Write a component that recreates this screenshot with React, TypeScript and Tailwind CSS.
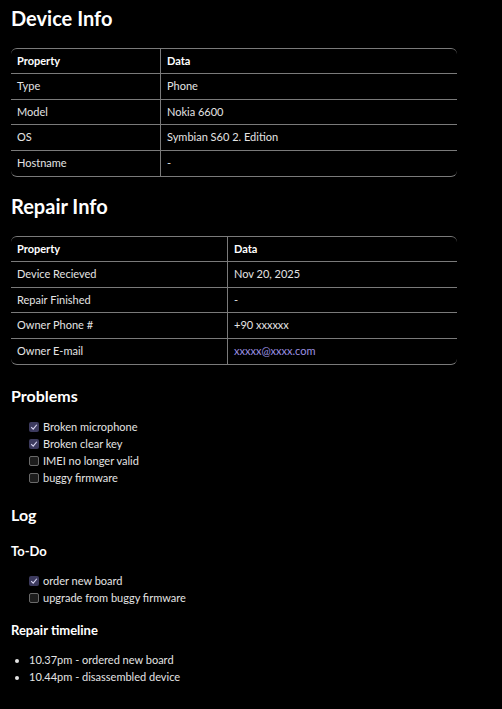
const deviceRows = [
  ['Type', 'Phone'],
  ['Model', 'Nokia 6600'],
  ['OS', 'Symbian S60 2. Edition'],
  ['Hostname', '-'],
];

const repairRows = [
  ['Device Recieved', 'Nov 20, 2025'],
  ['Repair Finished', '-'],
  ['Owner Phone #', '+90 xxxxxx'],
  ['Owner E-mail', 'xxxxx@xxxx.com'],
];

const problems = [
  { label: 'Broken microphone', done: true },
  { label: 'Broken clear key', done: true },
  { label: 'IMEI no longer valid', done: false },
  { label: 'buggy firmware', done: false },
];

const todos = [
  { label: 'order new board', done: true },
  { label: 'upgrade from buggy firmware', done: false },
];

function Check({ done }: { done: boolean }) {
  if (done) {
    return (
      <span className="inline-flex items-center justify-center w-[10px] h-[10px] rounded-[2px] bg-[#3c3a5e] mr-[4px]">
        <svg viewBox="0 0 10 10" className="w-[8px] h-[8px]">
          <path d="M1.5 5.2 L4 7.6 L8.5 2.2" fill="none" stroke="#d8d6f2" strokeWidth="1.4" />
        </svg>
      </span>
    );
  }
  return <span className="inline-block w-[10px] h-[10px] rounded-[2px] bg-[#1c1c1c] border border-[#6a6a6a] mr-[4px]" />;
}

function InfoTable({ rows, col, link }: { rows: string[][]; col: string; link?: boolean }) {
  const all = [['Property', 'Data'], ...rows];
  return (
    <div className="w-[446px] border-y border-[#7a7a7a] rounded-[6px]">
      {all.map((r, i) => (
        <div
          key={i}
          className={`grid ${col} h-[25.4px] ${i < all.length - 1 ? 'border-b border-[#7a7a7a]' : ''} ${i === 0 ? 'font-bold text-white' : 'text-[#e4e4e4]'}`}
        >
          <div className="flex items-center pl-[6px] border-r border-[#7a7a7a]">{r[0]}</div>
          <div
            className={`flex items-center pl-[6px] ${link && i === all.length - 1 ? 'text-[#9b8fe0]' : ''}`}
          >
            {r[1]}
          </div>
        </div>
      ))}
    </div>
  );
}

export default function App() {
  return (
    <div className="min-h-[709px] bg-black text-[#e4e4e4] px-[11px] pt-[6px] pb-6 text-[11px] font-['Lato','Noto_Sans',sans-serif]">
      <h2 className="text-[20px] leading-[24px] font-bold text-white">Device Info</h2>
      <div className="mt-[18px]">
        <InfoTable rows={deviceRows} col="grid-cols-[150px_1fr]" />
      </div>

      <h2 className="mt-[17px] text-[20px] leading-[24px] font-bold text-white">Repair Info</h2>
      <div className="mt-[18px]">
        <InfoTable rows={repairRows} col="grid-cols-[217px_1fr]" link />
      </div>

      <h3 className="mt-[21px] text-[16px] leading-[20px] font-bold text-white">Problems</h3>
      <ul className="mt-[13px] pl-[18px]">
        {problems.map((p) => (
          <li key={p.label} className="flex items-center h-[17px]">
            <Check done={p.done} />
            {p.label}
          </li>
        ))}
      </ul>

      <h3 className="mt-[18px] text-[16px] leading-[20px] font-bold text-white">Log</h3>
      <h4 className="mt-[18px] text-[13px] leading-[16px] font-bold text-white">To-Do</h4>
      <ul className="mt-[14px] pl-[18px]">
        {todos.map((p) => (
          <li key={p.label} className="flex items-center h-[17px]">
            <Check done={p.done} />
            {p.label}
          </li>
        ))}
      </ul>

      <h4 className="mt-[15px] text-[13px] leading-[16px] font-bold text-white">Repair timeline</h4>
      <ul className="mt-[13px] pl-[18px] list-disc">
        <li className="h-[17px] leading-[17px]">10.37pm - ordered new board</li>
        <li className="h-[17px] leading-[17px]">10.44pm - disassembled device</li>
      </ul>
    </div>
  );
}
